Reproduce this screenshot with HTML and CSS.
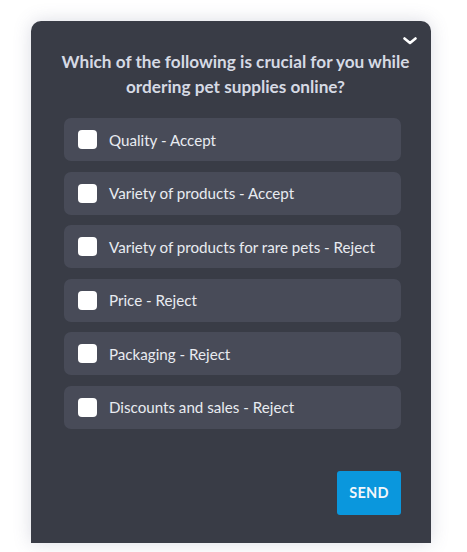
FILE: index.html
```html
<!DOCTYPE html>
<html>
<head>
<meta charset="utf-8">
<link rel="stylesheet" href="styles.css">
</head>
<body>
<div class="page">
  <div class="card">
    <button class="collapse" aria-label="Collapse">
      <svg width="14" height="8" viewBox="0 0 14 8"><path d="M1.5 1.5 L7 6 L12.5 1.5" fill="none" stroke="#ffffff" stroke-width="2.6" stroke-linecap="round" stroke-linejoin="round"/></svg>
    </button>
    <h2 class="question">Which of the following is crucial for you while ordering pet supplies online?</h2>
    <div class="options">
      <label class="option"><span class="box"></span><span class="label">Quality - Accept</span></label>
      <label class="option"><span class="box"></span><span class="label">Variety of products - Accept</span></label>
      <label class="option"><span class="box"></span><span class="label">Variety of products for rare pets - Reject</span></label>
      <label class="option"><span class="box"></span><span class="label">Price - Reject</span></label>
      <label class="option"><span class="box"></span><span class="label">Packaging - Reject</span></label>
      <label class="option"><span class="box"></span><span class="label">Discounts and sales - Reject</span></label>
    </div>
    <div class="actions">
      <button class="send">SEND</button>
    </div>
  </div>
</div>
</body>
</html>
```
FILE: styles.css
```css
html, body {
  margin: 0;
  padding: 0;
  background: #ffffff;
}
.page {
  width: 467px;
  height: 552px;
  padding: 21px 0 0 31px;
  box-sizing: border-box;
  overflow: hidden;
}
.card {
  position: relative;
  width: 400px;
  height: 522px;
  box-sizing: border-box;
  background: #393c46;
  border-radius: 10px 10px 0 0;
  box-shadow: 0 0 18px rgba(90, 95, 130, 0.22);
  padding: 28px 30px 0 33px;
  font-family: "Source Sans Pro", Lato, "Liberation Sans", sans-serif;
}
.collapse {
  position: absolute;
  top: 15px;
  right: 13px;
  width: 16px;
  height: 10px;
  padding: 0;
  border: 0;
  background: none;
  display: flex;
  align-items: center;
  justify-content: center;
}
.question {
  margin: 0 -12px 0 -6px;
  color: #d6dae4;
  font-size: 17.2px;
  line-height: 25px;
  font-weight: 700;
  text-align: center;
}
.options {
  margin-top: 19px;
  display: flex;
  flex-direction: column;
  gap: 10.6px;
}
.option {
  height: 43px;
  background: #484b58;
  border-radius: 7px;
  display: flex;
  align-items: center;
  padding-left: 14px;
}
.box {
  width: 19px;
  height: 19px;
  background: #ffffff;
  border-radius: 4px;
  flex: none;
}
.label {
  margin-left: 12px;
  color: #e8ebf1;
  font-size: 15.15px;
}
.actions {
  margin-top: 42px;
  display: flex;
  justify-content: flex-end;
}
.send {
  width: 64px;
  height: 44px;
  border: 0;
  border-radius: 3px;
  background: #0a97dd;
  color: #f2f6fa;
  font-family: inherit;
  font-weight: 700;
  font-size: 14.5px;
  letter-spacing: 0.2px;
}
```
